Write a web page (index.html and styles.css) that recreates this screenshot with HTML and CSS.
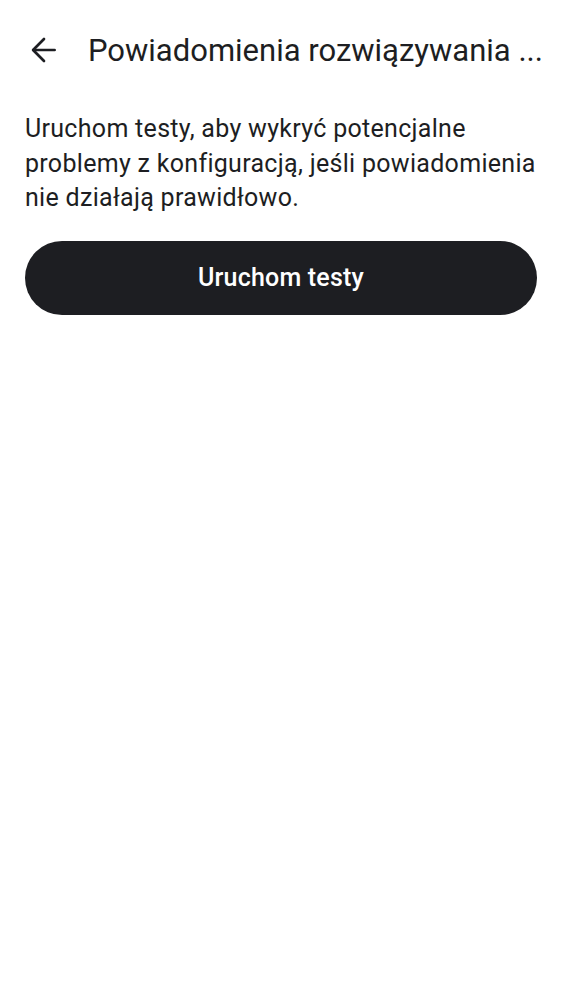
FILE: index.html
```html
<!DOCTYPE html>
<html lang="pl">
<head>
<meta charset="utf-8">
<link rel="stylesheet" href="styles.css">
</head>
<body>
<div class="screen">
  <header class="appbar">
    <button class="back" aria-label="Wstecz">
      <svg width="34" height="34" viewBox="0 0 24 24" fill="none" stroke="#1d1e22" stroke-width="1.9" stroke-linecap="round" stroke-linejoin="round"><path d="M19.5 12H4.5"/><path d="M12 4.2 4.3 12l7.7 7.8"/></svg>
    </button>
    <h1 class="title">Powiadomienia rozwiązywania ...</h1>
  </header>
  <main class="content">
    <p class="desc">Uruchom testy, aby wykryć potencjalne problemy z konfiguracją, jeśli powiadomienia nie działają prawidłowo.</p>
    <button class="run">Uruchom testy</button>
  </main>
</div>
</body>
</html>
```
FILE: styles.css
```css
* { box-sizing: border-box; }
html, body { margin: 0; padding: 0; background: #fff; }
body { font-family: Roboto, "Noto Sans", sans-serif; color: #1d1e22; }
.screen { width: 562px; }
.appbar {
  display: flex;
  align-items: center;
  height: 100px;
  padding: 0 16px 0 27px;
  gap: 27px;
}
.back {
  border: 0;
  background: none;
  padding: 0;
  width: 34px;
  height: 34px;
  display: flex;
  flex-shrink: 0;
}
.title {
  margin: 0;
  font-size: 31px;
  font-weight: 400;
  white-space: nowrap;
  overflow: hidden;
}
.content { padding: 12px 25px 0; }
.desc {
  margin: 0;
  font-size: 25px;
  line-height: 34.5px;
  letter-spacing: 0.3px;
}
.run {
  margin-top: 25px;
  width: 100%;
  height: 74px;
  border: 0;
  border-radius: 37px;
  background: #1d1e22;
  color: #fff;
  font-family: Roboto, sans-serif;
  font-size: 25px;
  font-weight: 500;
  letter-spacing: 0.2px;
}
```
